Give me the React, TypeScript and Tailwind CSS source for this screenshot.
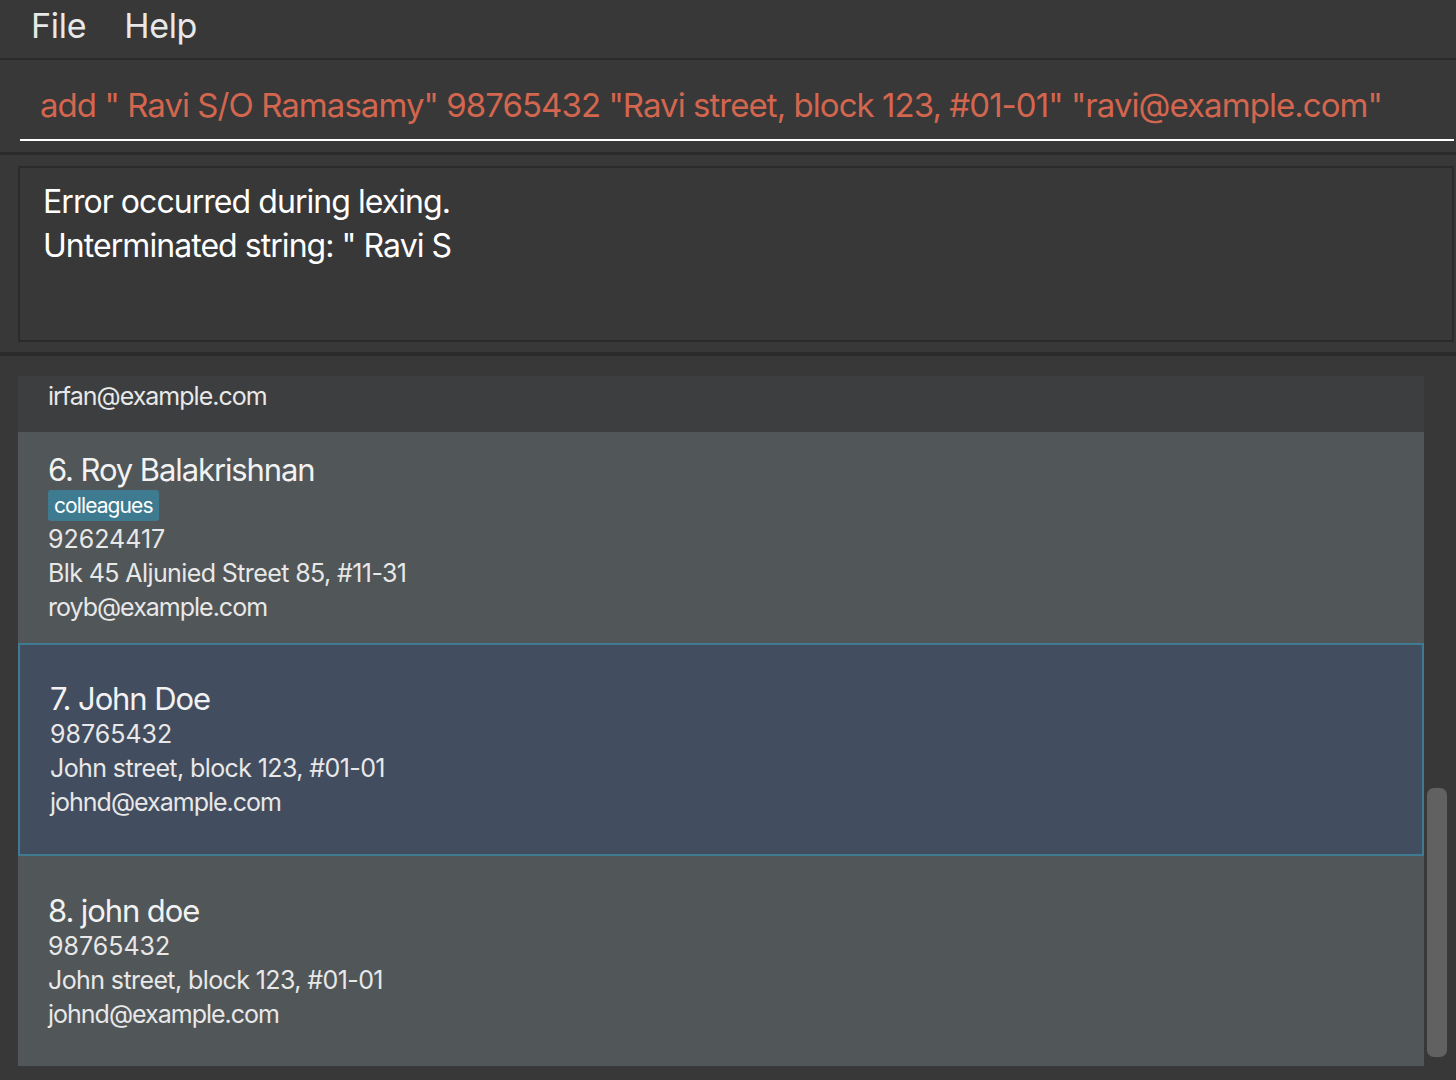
import type { ReactNode } from 'react';

type Person = {
  index: number;
  name: string;
  tags: string[];
  phone: string;
  address: string;
  email: string;
};

const people: Person[] = [
  {
    index: 5,
    name: 'Irfan Ibrahim',
    tags: ['classmates'],
    phone: '92492021',
    address: 'Blk 47 Tampines Street 20, #17-35',
    email: 'irfan@example.com',
  },
  {
    index: 6,
    name: 'Roy Balakrishnan',
    tags: ['colleagues'],
    phone: '92624417',
    address: 'Blk 45 Aljunied Street 85, #11-31',
    email: 'royb@example.com',
  },
  {
    index: 7,
    name: 'John Doe',
    tags: [],
    phone: '98765432',
    address: 'John street, block 123, #01-01',
    email: 'johnd@example.com',
  },
  {
    index: 8,
    name: 'john doe',
    tags: [],
    phone: '98765432',
    address: 'John street, block 123, #01-01',
    email: 'johnd@example.com',
  },
];

const font = { fontFamily: 'Inter, "Noto Sans", sans-serif' };

function Card({ person, selected, className }: { person: Person; selected?: boolean; className?: string }) {
  const bg = selected
    ? 'bg-[#424d5f] border-2 border-[#3e7b91] h-[213px] pl-[30px]'
    : person.index % 2 === 1
      ? 'bg-[#3c3e3f] h-[210px] pl-[30px]'
      : 'bg-[#515658] h-[211px] pl-[30px]';
  return (
    <div className={`flex flex-col justify-center shrink-0 ${bg} ${className ?? ''}`}>
      <div className="text-[31px] leading-[36px] tracking-[-1.1px] text-[#f2f2f2]">
        {person.index}. {person.name}
      </div>
      {person.tags.length > 0 && (
        <div className="flex gap-2 mt-[2px] mb-[1px]">
          {person.tags.map(t => (
            <span
              key={t}
              className="bg-[#3e7b91] text-white text-[21px] leading-[31px] tracking-[-0.9px] px-[6px] rounded-[3px]"
            >
              {t}
            </span>
          ))}
        </div>
      )}
      <div className="text-[25px] leading-[34px] tracking-[0px] text-[#e8e8e8]">{person.phone}</div>
      <div className="text-[25px] leading-[34px] tracking-[-0.6px] text-[#e8e8e8]">{person.address}</div>
      <div className="text-[25px] leading-[34px] tracking-[-1px] text-[#e8e8e8]">{person.email}</div>
    </div>
  );
}

function Separator({ children }: { children?: ReactNode }) {
  return <div className="h-[3px] bg-[#2b2b2b] shrink-0">{children}</div>;
}

export default function App() {
  return (
    <div className="w-[1456px] h-[1080px] overflow-hidden bg-[#383838] flex flex-col" style={font}>
      {/* menu bar */}
      <div className="h-[58px] flex items-center gap-[38px] pl-[31px] pb-[7px] text-[34px] tracking-[-0.3px] text-[#e8e8e8] shrink-0">
        <span>File</span>
        <span>Help</span>
      </div>
      <div className="h-[2px] bg-[#2b2b2b] shrink-0" />

      {/* command box */}
      <div className="h-[92px] pl-[20px] pr-[2px] pt-[25px] shrink-0">
        <div className="h-[56px] border-b-2 border-white pl-[20px] text-[33px] leading-[40px] tracking-[-0.95px] text-[#d3664f] whitespace-nowrap">
          add &quot; Ravi S/O Ramasamy&quot; 98765432 &quot;Ravi street, block 123, #01-01&quot; &quot;ravi@example.com&quot;
        </div>
      </div>
      <Separator />

      {/* result display */}
      <div className="h-[197px] pl-[18px] pr-[2px] pt-[11px] shrink-0">
        <div className="h-[176px] border-2 border-[#2b2b2b] pl-[23px] pt-[12px] text-[32px] leading-[44px] tracking-[-0.95px] text-white">
          <div>Error occurred during lexing.</div>
          <div>Unterminated string: &quot; Ravi S</div>
        </div>
      </div>
      <div className="h-[4px] bg-[#2b2b2b] shrink-0" />

      {/* person list */}
      <div className="flex flex-1 min-h-0 pt-[20px] pl-[18px] pb-[14px]">
        <div className="w-[1406px] flex flex-col overflow-hidden">
          <Card person={people[0]} className="-mt-[154px]" />
          <Card person={people[1]} />
          <Card person={people[2]} selected />
          <Card person={people[3]} />
        </div>
        <div className="flex-1 flex justify-center">
          <div className="w-[20px] mt-[412px] h-[269px] rounded-[7px] bg-[#616161] ml-[-6px]" />
        </div>
      </div>
    </div>
  );
}
